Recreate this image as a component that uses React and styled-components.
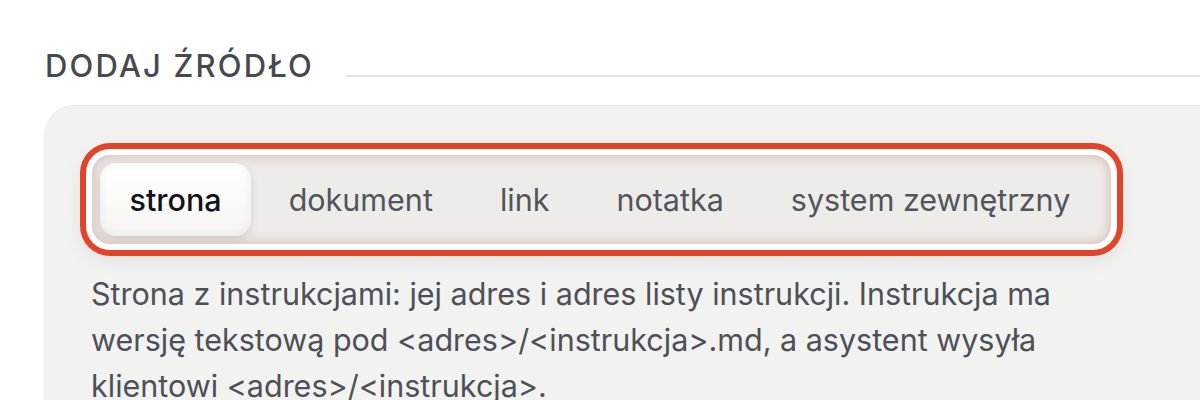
import { useState } from 'react';
import styled, { createGlobalStyle } from 'styled-components';

const GlobalStyle = createGlobalStyle`
  html, body {
    margin: 0;
    padding: 0;
    background: #ffffff;
    overflow: hidden;
  }
  body {
    font-family: Inter, "Noto Sans", "Liberation Sans", sans-serif;
    -webkit-font-smoothing: antialiased;
  }
`;

const Page = styled.div`
  width: 1200px;
  height: 400px;
  padding-top: 47px;
  box-sizing: border-box;
`;

const Header = styled.div`
  display: flex;
  align-items: flex-end;
  padding-left: 45px;
  gap: 32px;
`;

const Title = styled.h2`
  margin: 0;
  font-size: 31px;
  font-weight: 500;
  letter-spacing: 0.07em;
  color: #464950;
  line-height: 38px;
  white-space: nowrap;
`;

const Rule = styled.div`
  flex: 1;
  height: 2px;
  background: #e2e2e2;
  margin-bottom: 8px;
`;

const Panel = styled.section`
  margin: 20px 0 0 44px;
  width: 1240px;
  min-height: 320px;
  box-sizing: border-box;
  padding: 50px 48px;
  background: #f2f2f0;
  border-radius: 30px;
  box-shadow: inset 0 1px 2px rgba(0, 0, 0, 0.04);
`;

const TabBar = styled.div`
  display: flex;
  width: fit-content;
  align-items: center;
  gap: 8px;
  padding: 8px 11px 8px 8px;
  background: #eeece9;
  border-radius: 18px;
  box-shadow:
    inset 0 0 12px 2px rgba(190, 140, 130, 0.45),
    0 0 0 6px #ffffff,
    0 0 0 12px #e0442b,
    0 6px 20px 10px rgba(0, 0, 0, 0.08);
`;

const Tab = styled.button`
  border: none;
  margin: 0;
  height: 73px;
  padding: 0 29.5px;
  border-radius: 16px;
  font-family: inherit;
  font-size: 30.5px;
  cursor: pointer;
  white-space: nowrap;
  font-weight: ${({ $active }) => ($active ? 500 : 400)};
  color: ${({ $active }) => ($active ? '#121316' : '#51555c')};
  background: ${({ $active }) =>
    $active ? 'linear-gradient(180deg, #ffffff 0%, #f6f5f4 100%)' : 'transparent'};
  box-shadow: ${({ $active }) =>
    $active
      ? 'inset 0 0 10px rgba(0, 0, 0, 0.07), 0 3px 8px rgba(0, 0, 0, 0.12)'
      : 'none'};
`;

const Description = styled.p`
  margin: 27px 0 0 -1px;
  max-width: 1020px;
  font-size: 30.5px;
  line-height: 46px;
  color: #4d5057;
`;

const tabs = ['strona', 'dokument', 'link', 'notatka', 'system zewnętrzny'];

export default function App() {
  const [active, setActive] = useState('strona');

  return (
    <Page>
      <GlobalStyle />
      <Header>
        <Title>DODAJ ŹRÓDŁO</Title>
        <Rule />
      </Header>
      <Panel>
        <TabBar>
          {tabs.map((t) => (
            <Tab key={t} $active={t === active} onClick={() => setActive(t)}>
              {t}
            </Tab>
          ))}
        </TabBar>
        <Description>
          Strona z instrukcjami: jej adres i adres listy instrukcji. Instrukcja ma
          wersję tekstową pod &lt;adres&gt;/&lt;instrukcja&gt;.md, a asystent wysyła
          klientowi &lt;adres&gt;/&lt;instrukcja&gt;.
        </Description>
      </Panel>
    </Page>
  );
}
